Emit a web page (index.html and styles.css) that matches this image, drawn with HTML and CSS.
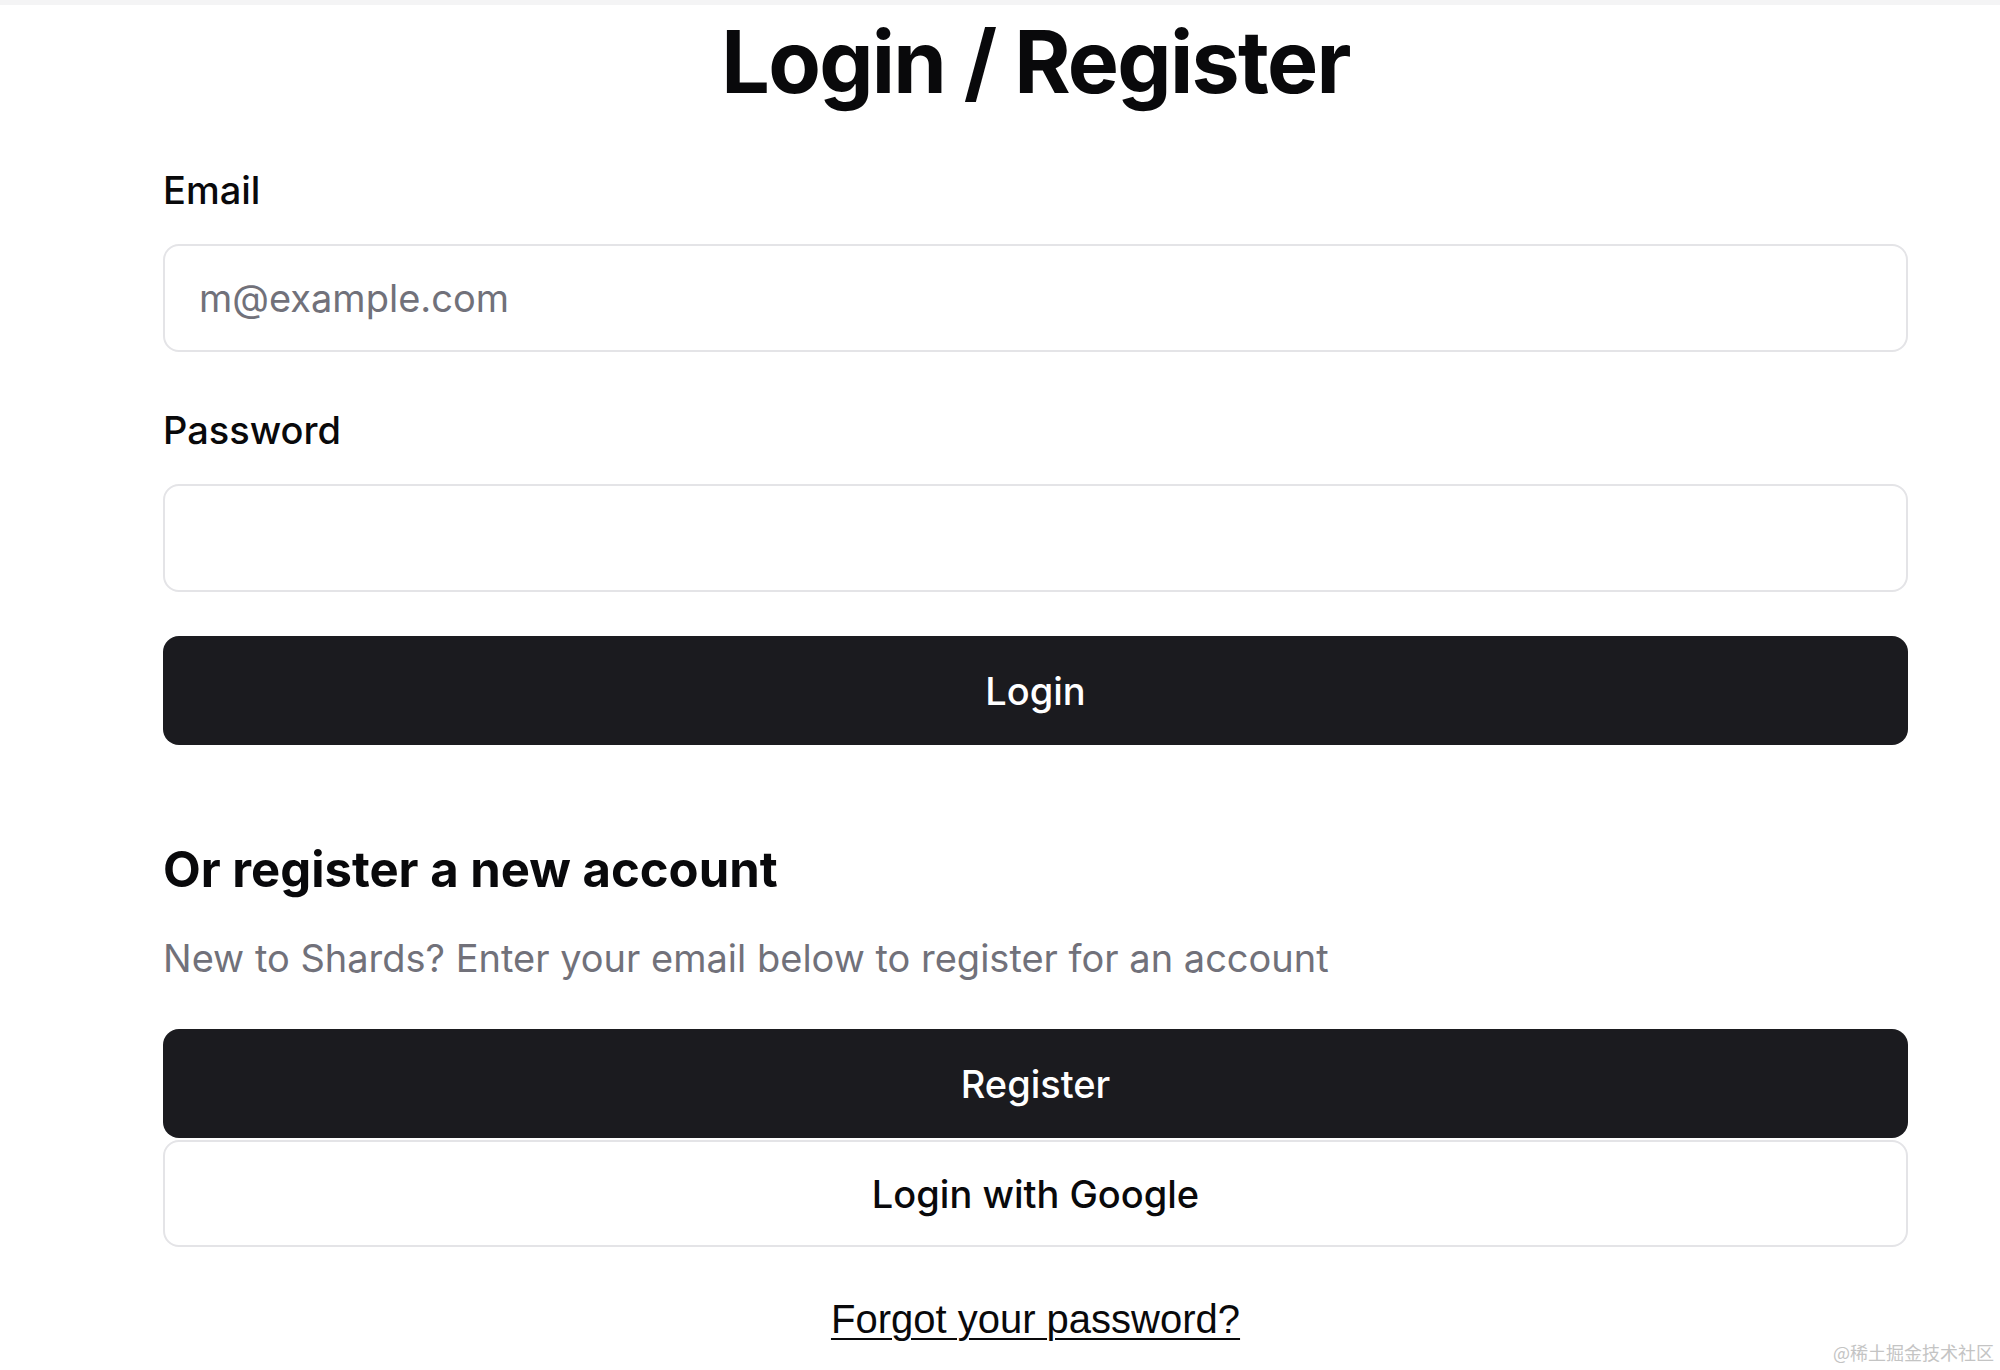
FILE: index.html
```html
<!DOCTYPE html>
<html lang="en">
<head>
<meta charset="utf-8">
<title>Login / Register</title>
<link rel="stylesheet" href="styles.css">
</head>
<body>
<div class="topstrip"></div>
<main class="page">
  <h1 class="title">Login / Register</h1>
  <form class="form">
    <label class="label" for="email">Email</label>
    <input class="input" id="email" type="email" placeholder="m@example.com">
    <label class="label label-pw" for="password">Password</label>
    <input class="input" id="password" type="password">
    <button class="btn btn-dark btn-login" type="button">Login</button>
  </form>
  <section class="register">
    <h2 class="subtitle">Or register a new account</h2>
    <p class="desc">New to Shards? Enter your email below to register for an account</p>
    <div class="btn-stack">
      <button class="btn btn-dark" type="button">Register</button>
      <button class="btn btn-light" type="button">Login with Google</button>
    </div>
    <div class="forgot-row"><a class="forgot" href="#">Forgot your password?</a></div>
  </section>
</main>
<div class="watermark">@稀土掘金技术社区</div>
</body>
</html>
```

FILE: styles.css
```css
html, body {
  margin: 0;
  padding: 0;
  background: #ffffff;
}
body {
  position: relative;
  width: 2000px;
  height: 1370px;
  overflow: hidden;
  font-family: Inter, "Noto Sans", "Liberation Sans", sans-serif;
  color: #09090b;
}
.topstrip {
  height: 5px;
  background: #f4f4f5;
}
.page {
  margin-left: 163px;
  width: 1745px;
  padding-top: 7px;
}
.title {
  margin: 0;
  text-align: center;
  font-size: 86px;
  line-height: 100px;
  font-weight: 700;
  letter-spacing: -0.02em;
}
.form {
  display: flex;
  flex-direction: column;
  margin-top: 56px;
}
.label {
  font-size: 38px;
  line-height: 44px;
  font-weight: 500;
  margin-bottom: 32px;
}
.label-pw {
  margin-top: 56px;
}
.input {
  box-sizing: border-box;
  width: 100%;
  height: 108px;
  padding: 0 34px;
  border: 2px solid #e4e4e7;
  border-radius: 16px;
  font-family: Inter, "Noto Sans", sans-serif;
  font-size: 38px;
  color: #09090b;
  background: #fff;
  outline: none;
}
.input::placeholder {
  color: #71717a;
}
.btn {
  box-sizing: border-box;
  width: 100%;
  height: 109px;
  border-radius: 16px;
  font-family: Inter, "Noto Sans", sans-serif;
  font-size: 38px;
  font-weight: 500;
  cursor: pointer;
  display: flex;
  align-items: center;
  justify-content: center;
}
.btn-dark {
  background: #1b1b1f;
  color: #ffffff;
  border: none;
}
.btn-light {
  background: #ffffff;
  color: #09090b;
  border: 2px solid #e4e4e7;
  height: 107px;
}
.btn-login {
  margin-top: 44px;
}
.register {
  margin-top: 96px;
}
.subtitle {
  margin: 0;
  font-size: 49px;
  line-height: 58px;
  font-weight: 700;
  letter-spacing: 0;
}
.desc {
  margin: 36px 0 0;
  font-size: 38px;
  line-height: 46px;
  color: #71717a;
}
.btn-stack {
  margin-top: 48px;
  display: flex;
  flex-direction: column;
  gap: 2px;
}
.forgot-row {
  margin-top: 49px;
  text-align: center;
}
.forgot {
  font-family: "Liberation Sans", Arial, sans-serif;
  font-size: 40px;
  line-height: 46px;
  color: #09090b;
  text-decoration: underline;
  text-underline-offset: 5px;
  text-decoration-thickness: 2px;
}
.watermark {
  position: absolute;
  right: 6px;
  bottom: 7px;
  font-family: "Noto Sans CJK SC", sans-serif;
  font-size: 18px;
  line-height: 22px;
  color: #c4c4c4;
}
```
